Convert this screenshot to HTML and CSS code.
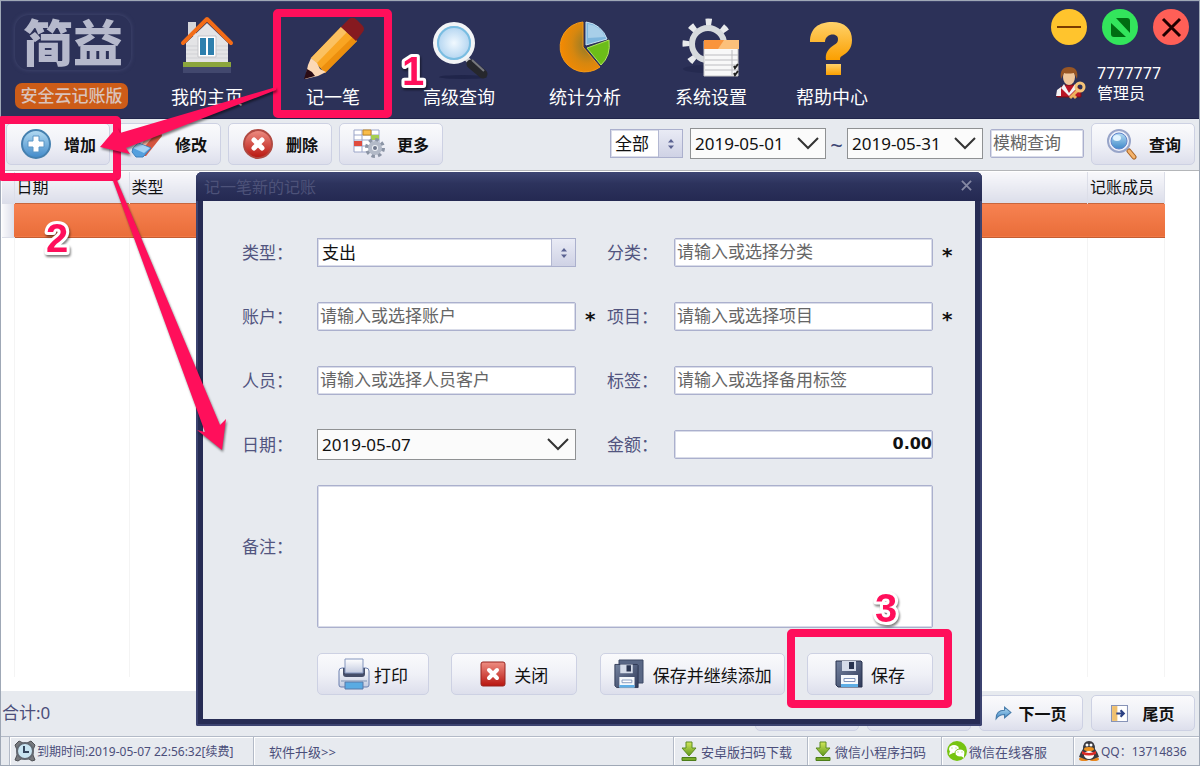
FILE: index.html
```
<!DOCTYPE html>
<html lang="zh-CN">
<head>
<meta charset="UTF-8">
<title>简益 安全云记账版</title>
<link rel="stylesheet" href="styles.css">
</head>
<body>
<svg class="defs" aria-hidden="true">
	<defs>
		<linearGradient id="g_blue" x1="0" y1="0" x2="0" y2="1"><stop offset="0" stop-color="#b4dcf3"/><stop offset="1" stop-color="#4089c9"/></linearGradient>
		<linearGradient id="g_red" x1="0" y1="0" x2="0" y2="1"><stop offset="0" stop-color="#ee8e83"/><stop offset="1" stop-color="#b8150f"/></linearGradient>
		<linearGradient id="g_gold" x1="0" y1="0" x2="0" y2="1"><stop offset="0" stop-color="#ffd26a"/><stop offset="1" stop-color="#fb9f00"/></linearGradient>
		<linearGradient id="g_green" x1="0" y1="0" x2="0" y2="1"><stop offset="0" stop-color="#d2e85b"/><stop offset="1" stop-color="#5d971b"/></linearGradient>
		<linearGradient id="g_steel" x1="0" y1="0" x2="1" y2="1"><stop offset="0" stop-color="#75839f"/><stop offset="1" stop-color="#303b5b"/></linearGradient>
		<linearGradient id="g_paper" x1="0" y1="0" x2="0" y2="1"><stop offset="0" stop-color="#ffffff"/><stop offset="1" stop-color="#c3cbe0"/></linearGradient>
		<radialGradient id="g_lens"><stop offset="0" stop-color="#f1f9ff"/><stop offset="1" stop-color="#a9cfee"/></radialGradient>
		<radialGradient id="g_pie" cx=".68" cy=".45" r=".7"><stop offset="0" stop-color="#8b7a2c"/><stop offset=".55" stop-color="#d7870f"/><stop offset="1" stop-color="#f88a00"/></radialGradient>
	</defs>
	<symbol id="i_updown" viewBox="0 0 8 12"><path fill="#5a6291" d="M1 4.500 4 1l3 3.500zM1 7.500h6L4 11z"/></symbol>
	<symbol id="i_chevron" viewBox="0 0 22 13"><path fill="none" stroke="#333" stroke-width="2" d="m1 1 10 10L21 1"/></symbol>
	<symbol id="i_down" viewBox="0 0 16 20"><path fill="url(#g_green)" stroke="#5d8c22" d="M5 1h6v6h4l-7 8-7-8h4z"/><path fill="#79ab2b" stroke="#4c7d1a" d="M1 16.500h14v3H1z"/></symbol>
	<symbol id="i_disk" viewBox="0 0 28 28"><path fill="url(#g_steel)" stroke="#28324f" d="M1 1h25l1 1v25H3l-2-2z"/><path fill="#d4dbe9" d="M7 1h14v10H7z"/><path fill="#28334f" d="M14 2h5v7h-5z"/><path fill="#f5f8fc" d="M6 15h17v12H6z"/><path fill="#5eaee6" d="M6 24h17v3H6z"/><path fill="#fff" stroke="#7f93ba" d="M9 18.500h11v3H9z"/></symbol>
</svg>

<div class="app">
	<header class="header">
		<div class="brand">
			<div class="brand_name">简益</div>
			<div class="brand_tag">安全云记账版</div>
		</div>
		<nav class="nav">
			<a class="nav_item" href="#">
				<svg class="nav_icon" viewBox="3 1 60 60">
					<path fill="#586083" opacity=".5" d="M9 52h48v6H9z"/>
					<path fill="#d6d6da" d="M14 7h8v14h-8z"/>
					<path fill="#e4e4e6" d="m33 8 21 20v19H12V28z"/>
					<path stroke="#d0d1d5" d="M12 31h42M12 35h42M12 39h42M12 43h42"/>
					<path fill="none" stroke="#f36c17" stroke-width="4" stroke-linecap="round" stroke-linejoin="round" d="M9 28 33 4l24 24"/>
					<path fill="#fff" stroke="#c5c5c9" d="M24 21h18v21H24z"/><path fill="#2d7fad" d="M26 23h6v17h-6zM34 23h6v17h-6z"/>
					<path fill="#8ba63c" d="M9 47h48v5H9z"/>
				</svg>
				<span>我的主页</span>
			</a>
			<a class="nav_item" href="#">
				<svg class="nav_icon" viewBox="-1 0 60 60">
					<path fill="#f9a522" d="m37 11 16 14-32 32-14-15z"/>
					<path fill="#fbc161" d="m37 11 6 5-30 31-6-5z"/>
					<path fill="#ed8f0d" d="m49 21 4 4-32 32-4-5z"/>
					<path fill="#fcd8b5" d="m7 42-3 7L1 63l13-3 8-4-6-3-3-6z"/>
					<path fill="#2b0c14" d="m3 53-3 10 11-3-3-4z"/>
					<path fill="#861a20" d="m37 11 8-8q4-3 8 1l5 5q4 4 0 8l-6 8z"/>
				</svg>
				<span>记一笔</span>
			</a>
			<a class="nav_item" href="#">
				<svg class="nav_icon" viewBox="0 0 60 60">
					<ellipse cx="34" cy="61" rx="24" ry="2" fill="#20254a"/>
					<path stroke="#c9c9cc" stroke-width="5" d="m36 41 6 6"/>
					<path stroke="#26272c" stroke-width="9" stroke-linecap="round" d="m42 48 12 10"/><path stroke="#77787d" stroke-width="2" d="m43 44 12 11"/>
					<circle cx="25" cy="27" r="19" fill="url(#g_lens)" stroke="#f2f4f6" stroke-width="4"/><circle cx="25" cy="27" r="16" fill="none" stroke="#79bde1" stroke-width="2"/>
				</svg>
				<span>高级查询</span>
			</a>
			<a class="nav_item" href="#">
				<svg class="nav_icon" viewBox="0 0 60 60">
					<path fill="url(#g_pie)" stroke="#f59a17" d="M28 6a25 25 0 1 0 17 45L28 31z"/>
					<path fill="#7eb6dd" stroke="#cae4f4" d="M31 6a25 25 0 0 1 21 17L31 29z"/><path fill="#a8cfe9" d="M33 8q13 2 17 13l-17 1z"/>
					<path fill="#6cbd18" stroke="#b3e561" d="M54 24q2 16-8 25L32 32z"/>
				</svg>
				<span>统计分析</span>
			</a>
			<a class="nav_item" href="#">
				<svg class="nav_icon" viewBox="-1 -1 60 60">
					<ellipse cx="26" cy="52" rx="25" ry="4" fill="#252a50"/>
					<circle cx="26" cy="27" r="22" fill="none" stroke="#e8eaec" stroke-width="7" stroke-dasharray="6 11.280" stroke-dashoffset="3"/>
					<circle cx="26" cy="27" r="16" fill="none" stroke="#d6dadd" stroke-width="6"/>
					<path fill="#f8f8f8" stroke="#c8c8c8" d="M22 24h34v35H22z"/>
					<path fill="#f9943c" d="M22 23h35v9H22z"/><path fill="#fcc07a" d="M42 23h15v9H36z"/>
					<path stroke="#bcbcc0" d="M23 38h33M23 43h33M23 48h33M23 53h33M50 33v25"/>
					<path fill="none" stroke="#222" stroke-width="2" d="m52 49 1 2 3-4m-4 9 1 2 3-4"/>
				</svg>
				<span>系统设置</span>
			</a>
			<a class="nav_item" href="#">
				<svg class="nav_icon" viewBox="0 0 60 60">
					<path fill="url(#g_gold)" d="M8 26C8 12 17 6 30 6s20 7 20 18c0 9-5 13-10 16-2 1-2 2-2 4H24c-1-7 2-11 8-15 3-2 4-3 4-6 0-7-13-6-13 3z"/>
					<path fill="url(#g_gold)" d="M24 48h15v11H24z"/>
				</svg>
				<span>帮助中心</span>
			</a>
		</nav>
		<div class="account">
			<div class="win_btns">
				<button class="win_btn" aria-label="最小化"><svg viewBox="0 0 37 37"><circle cx="18" cy="18" r="18" fill="#ffc42d"/><path stroke="#7a3c00" stroke-width="2" d="M6 18h24"/></svg></button>
				<button class="win_btn" aria-label="最大化"><svg viewBox="0 0 37 37"><circle cx="18" cy="18" r="18" fill="#33e55c"/><path fill="#006d12" d="M14 9h11q3 0 3 3v12zM9 14v11q0 3 3 3h12z"/></svg></button>
				<button class="win_btn" aria-label="关闭窗口"><svg viewBox="0 0 37 37"><circle cx="18" cy="18" r="18" fill="#ff5f57"/><path stroke="#1d0000" stroke-width="3" d="m10 10 17 17M27 10 10 27"/></svg></button>
			</div>
			<div class="user">
				<svg class="user_icon" viewBox="0 0 32 34">
					<path fill="#b91525" stroke="#721019" d="M2 31q-1-9 8-12h9q8 3 7 12z"/>
					<path fill="#f2f3f5" d="m9 18 5 9 6-9 2 4-8 8-8-8zM2 24l4-3v9H1z"/>
					<ellipse cx="14" cy="11" rx="6" ry="8" fill="#efc69a"/><path fill="#985624" d="M6 13Q4 1 14 1t8 12l-3-6q-7 1-10 0z"/>
					<path stroke="#edb15c" stroke-width="3" d="m24 23-9 9m3-3 3 3"/><circle cx="25" cy="21" r="4" fill="none" stroke="#f5c478" stroke-width="3"/>
				</svg>
				<div>7777777<br>管理员</div>
			</div>
		</div>
	</header>

	<div class="toolbar">
		<button class="btn btn_tool">
			<svg class="tool_icon" viewBox="0 0 32 32"><circle cx="16" cy="16" r="14" fill="url(#g_blue)" stroke="#4580af" stroke-width="2"/><path fill="#fff" stroke="#5a96c6" d="M13 8h6v5h5v6h-5v5h-6v-5H8v-6h5z"/></svg>
			<span>增加</span>
		</button>
		<button class="btn btn_tool">
			<svg class="tool_icon" viewBox="0 0 32 32"><path fill="#d5553f" d="M17 4h13l1 4-16 20H6z"/><path fill="#f3b8a6" d="m22 4 3 1L10 23l-4-2z"/><path fill="#55a0de" stroke="#3d80bd" d="m2 20 5-5 13 5-8 9H5l-4-5z"/><path fill="#a5d2f3" d="m2 20 5-5 12 5-6 5z"/></svg>
			<span>修改</span>
		</button>
		<button class="btn btn_tool">
			<svg class="tool_icon" viewBox="0 0 32 32"><circle cx="16" cy="16" r="14" fill="url(#g_red)" stroke="#b04a42" stroke-width="2"/><path stroke="#fff" stroke-width="5" stroke-linecap="round" d="m12 12 8 8m0-8-8 8"/></svg>
			<span>删除</span>
		</button>
		<button class="btn btn_tool">
			<svg class="tool_icon" viewBox="0 0 32 32"><path fill="#fff" stroke="#9ba5c8" d="M1 2h25v22H1zM1 7h25M1 12h25M1 18h25M9 2v22M18 2v22"/><path fill="#f9bd4a" stroke="#c58a24" d="M10 2h8v5h-8z"/><path fill="#a5cf52" d="M18 7h8v5h-8z"/><path fill="#e04c3e" d="M1 13h8v5H1z"/><circle cx="22" cy="20" r="8" fill="none" stroke="#8b94a5" stroke-width="4" stroke-dasharray="3.300 2.980"/><circle cx="22" cy="20" r="5" fill="#eef1f6" stroke="#b3bac8" stroke-width="4"/><circle cx="22" cy="20" r="2" fill="#6e778b"/></svg>
			<span>更多</span>
		</button>

		<div class="filters">
			<div class="pick pick_type">
				<select aria-label="收支范围"><option>全部</option></select>
				<span class="spin"><svg viewBox="0 0 8 12"><use href="#i_updown"/></svg></span>
			</div>
			<div class="pick pick_date">
				<select aria-label="开始日期"><option>2019-05-01</option></select>
				<svg class="chevron" viewBox="0 0 22 13"><use href="#i_chevron"/></svg>
			</div>
			<span class="tilde">~</span>
			<div class="pick pick_date">
				<select aria-label="结束日期"><option>2019-05-31</option></select>
				<svg class="chevron" viewBox="0 0 22 13"><use href="#i_chevron"/></svg>
			</div>
			<input class="field search" type="text" aria-label="模糊查询" placeholder="模糊查询">
			<button class="btn btn_tool">
				<svg class="tool_icon" viewBox="0 0 32 32"><path stroke="#a66124" stroke-width="5" stroke-linecap="round" d="m24 23 5 6"/><path stroke="#f4b36c" stroke-width="3" stroke-linecap="round" d="m24 23 5 6"/><circle cx="14" cy="13" r="11" fill="#eef1fa" stroke="#98a5c9" stroke-width="2"/><circle cx="14" cy="13" r="8" fill="url(#g_blue)" stroke="#6385cc"/><ellipse cx="12" cy="10" rx="4" ry="3" fill="#e2f4ff"/></svg>
				<span>查询</span>
			</button>
		</div>
	</div>

	<main class="list">
		<table class="records">
			<colgroup><col class="col_mark"><col class="col_date"><col><col class="col_member"></colgroup>
			<thead><tr><th></th><th>日期</th><th>类型</th><th>记账成员</th></tr></thead>
			<tbody>
				<tr class="selected"><td></td><td></td><td></td><td></td></tr>
				<tr class="rest"><td></td><td></td><td></td><td></td></tr>
			</tbody>
		</table>
	</main>

	<div class="pager">
		<div class="total">合计:0</div>
		<button class="btn btn_page" aria-label="首页"></button>
		<button class="btn btn_page" aria-label="上一页"></button>
		<button class="btn btn_page">
			<svg class="page_icon" viewBox="0 0 16 16"><path fill="url(#g_blue)" stroke="#477cab" d="M1 13Q1 5 9 5V2l6 5-6 5V9q-5 0-8 4z"/></svg>
			<span>下一页</span>
		</button>
		<button class="btn btn_page btn_last">
			<svg class="page_icon" viewBox="0 0 16 16"><path fill="#fff" stroke="#8793b7" d="M.500.500h15v15H.500z"/><path fill="#efc06f" d="M1 1h5v14H1z"/><path fill="none" stroke="#2c4184" stroke-width="2" d="M5 8h7M9 5l3 3-3 3"/></svg>
			<span>尾页</span>
		</button>
	</div>

	<footer class="status">
		<div class="status_item status_time">
			<svg class="status_icon" viewBox="0 0 22 22"><path fill="#77797d" stroke="#4d4f54" d="m1 5 4-4 4 2h4l4-2 4 4-2 5v5l2 5-3 1-3-2H7l-3 2-3-1 2-5v-5z"/><circle cx="11" cy="11" r="8" fill="#c8e4f1" stroke="#626871" stroke-width="2"/><path fill="none" stroke="#33455c" stroke-width="2" d="M10 6v6h5"/></svg>
			<span>到期时间:2019-05-07 22:56:32<a href="#">[续费]</a></span>
		</div>
		<a class="status_item status_up" href="#">软件升级&gt;&gt;</a>
		<a class="status_item status_link" href="#"><svg class="down_icon" viewBox="0 0 16 20"><use href="#i_down"/></svg>安卓版扫码下载</a>
		<a class="status_item status_link" href="#"><svg class="down_icon" viewBox="0 0 16 20"><use href="#i_down"/></svg>微信小程序扫码</a>
		<a class="status_item status_link status_chat" href="#">
			<svg class="status_icon" viewBox="0 0 22 22"><circle cx="11" cy="11" r="10" fill="#76c410"/><ellipse cx="8" cy="9" rx="5" ry="4" fill="#fff"/><path fill="#fff" d="m4 11-1 4 4-2z"/><ellipse cx="14" cy="13" rx="5" ry="4" fill="#fff" stroke="#76c410"/><path fill="#fff" d="m15 16 3 2v-4z"/><path stroke="#76c410" stroke-width="1" stroke-linecap="round" d="M6 8h0M10 8h0M12 12h0M16 12h0"/></svg>微信在线客服
		</a>
		<a class="status_item status_link status_chat status_qq" href="#">
			<svg class="status_icon" viewBox="0 0 22 22"><ellipse cx="6" cy="19" rx="5" ry="2" fill="#e78720"/><ellipse cx="16" cy="19" rx="5" ry="2" fill="#e78720"/><path fill="#3a3a40" d="M5 9q0-8 6-8t6 8q3 4 4 8l-3 1q-7 4-14 0l-3-1q1-4 4-8z"/><ellipse cx="11" cy="15" rx="5" ry="4" fill="#fff"/><path fill="#d92b26" d="M4 11q7 4 14 0v3q-7 3-14 0z"/><ellipse cx="11" cy="9" rx="5" ry="2" fill="#ee921e"/><circle cx="9" cy="5" r="1.500" fill="#fff"/><circle cx="13" cy="5" r="1.500" fill="#fff"/></svg>QQ：13714836
		</a>
	</footer>
</div>

<div class="dialog" role="dialog" aria-labelledby="dlg_title">
	<div class="dialog_head">
		<h2 id="dlg_title">记一笔新的记账</h2>
		<button class="dialog_x" aria-label="关闭对话框"><svg viewBox="0 0 12 12"><path stroke="#8588a3" stroke-width="2" d="m1 1 10 10M11 1 1 11"/></svg></button>
	</div>
	<form class="dialog_body">
		<div class="form_grid">
			<label for="f_type">类型：</label>
			<div class="pick pick_type">
				<select id="f_type"><option>支出</option></select>
				<span class="spin"><svg viewBox="0 0 8 12"><use href="#i_updown"/></svg></span>
			</div>
			<span></span>
			<label for="f_cat">分类：</label>
			<input class="field" id="f_cat" type="text" placeholder="请输入或选择分类">
			<span class="must">*</span>

			<label for="f_acc">账户：</label>
			<input class="field" id="f_acc" type="text" placeholder="请输入或选择账户">
			<span class="must">*</span>
			<label for="f_item">项目：</label>
			<input class="field" id="f_item" type="text" placeholder="请输入或选择项目">
			<span class="must">*</span>

			<label for="f_person">人员：</label>
			<input class="field" id="f_person" type="text" placeholder="请输入或选择人员客户">
			<span></span>
			<label for="f_tag">标签：</label>
			<input class="field" id="f_tag" type="text" placeholder="请输入或选择备用标签">
			<span></span>

			<label for="f_date">日期：</label>
			<div class="pick pick_date">
				<select id="f_date"><option>2019-05-07</option></select>
				<svg class="chevron" viewBox="0 0 22 13"><use href="#i_chevron"/></svg>
			</div>
			<span></span>
			<label for="f_money">金额：</label>
			<input class="field money" id="f_money" type="text" value="0.00">
			<span></span>
		</div>
		<div class="form_note">
			<label for="f_note">备注：</label>
			<textarea class="field note" id="f_note"></textarea>
		</div>
		<div class="actions">
			<button type="button" class="btn btn_print">
				<svg class="act_icon" viewBox="0 0 32 32"><path fill="url(#g_paper)" stroke="#6b7fae" d="M1 13q0-3 3-3h24q3 0 3 3v14q0 2-2 2H3q-2 0-2-2z"/><path fill="#454e68" d="M5 10h22v6q0 3-3 3H8q-3 0-3-3z"/><path fill="url(#g_paper)" stroke="#8496bd" d="M7 1h18v14H7z"/><path fill="#5aabe3" stroke="#5879a8" d="M7 24h18v7H7z"/><path stroke="#7e93b5" d="M3 23h26"/></svg>
				<span>打印</span>
			</button>
			<button type="button" class="btn btn_close">
				<svg class="close_icon" viewBox="0 0 26 26"><rect x="1" y="1" width="24" height="24" rx="2" fill="url(#g_red)" stroke="#982420"/><path stroke="#fff" stroke-width="4" stroke-linecap="round" d="m9 9 8 8m0-8-8 8"/></svg>
				<span>关闭</span>
			</button>
			<button type="button" class="btn btn_more">
				<svg class="act_icon" viewBox="0 0 32 32"><path fill="#596785" stroke="#3c4864" d="M6 2h24v23H6z"/><svg x="1" y="5" width="25" height="26" viewBox="0 0 28 28"><use href="#i_disk"/></svg></svg>
				<span>保存并继续添加</span>
			</button>
			<button type="button" class="btn btn_save">
				<svg class="save_icon" viewBox="0 0 28 28"><use href="#i_disk"/></svg>
				<span>保存</span>
			</button>
		</div>
	</form>
</div>

<!-- step by step guide -->
<svg class="guide" width="1200" height="766" viewBox="0 0 1200 766">
	<g class="guide_box">
		<rect x="277" y="13" width="111" height="101" rx="1"/>
		<rect x="1" y="120" width="116" height="57" rx="1"/>
		<rect x="791" y="633" width="157" height="71" rx="1"/>
	</g>
	<g class="guide_arrow">
		<path d="m276 87-156 46-3-6-17 20 30 7-4-6 150-58z"/>
		<path d="m112 178 93 254-8-2 25 20 4-31-6 6L116 178z"/>
	</g>
	<g class="guide_num">
		<text x="402" y="85">1</text>
		<text x="46" y="252">2</text>
		<text x="875" y="622">3</text>
	</g>
</svg>
</body>
</html>
```
FILE: styles.css
```
*{
	box-sizing:border-box;
	margin:0;
	padding:0;
}
body{
	font-family:"Noto Sans","Noto Sans CJK SC",sans-serif;
	font-size:17px;
	color:#111;
	background-color:#fff;
}
a{
	color:inherit;
	text-decoration:none;
}
button, input, select, textarea{
	font:inherit;
	color:inherit;
}
button{
	cursor:pointer;
}
svg{
	display:block;
	flex:none;
}
.defs{
	position:absolute;
	width:0;
	height:0;
}
.app{
	display:flex;
	flex-direction:column;
	min-height:100vh;
	border:1px solid #9fa8b6;
}

/* header */
.header{
	display:flex;
	height:118px;
	background-color:#2c3158;
	border-top:1px solid #3c426a;
	border-bottom:1px solid #20254a;
}
.brand{
	width:143px;
	padding:13px 0 0 14px;
}
.brand_name{
	width:116px;
	height:55px;
	border-radius:14px;
	box-shadow:0 0 4px #454b73;
	font-size:50px;
	line-height:56px;
	font-weight:900;
	text-align:center;
	color:#b6b9cc;
}
.brand_tag{
	width:113px;
	margin-top:13px;
	border-radius:7px;
	background-color:#cd5c18;
	font-size:17px;
	line-height:26px;
	font-weight:500;
	text-align:center;
	color:#dac3bb;
}
.nav{
	display:flex;
}
.nav_item{
	display:flex;
	flex-direction:column;
	align-items:center;
	width:126px;
	padding-top:14px;
	font-size:18px;
	line-height:26px;
	color:#fff;
}
.nav_item:last-child{
	width:116px;
}
.nav_icon{
	width:60px;
	height:60px;
	margin-bottom:8px;
	overflow:visible;
}
.account{
	margin-left:auto;
	padding:7px 9px 0 0;
}
.win_btns{
	display:flex;
	gap:14px;
}
.win_btn{
	width:37px;
	height:37px;
	border:0;
	background:none;
}
.user{
	display:flex;
	align-items:center;
	gap:10px;
	margin-top:17px;
	padding-left:4px;
	font-size:16px;
	line-height:20px;
	color:#fff;
}
.user_icon{
	width:32px;
	height:34px;
}

/* buttons */
.btn{
	display:flex;
	align-items:center;
	justify-content:center;
	height:42px;
	border:1px solid #cdd1e3;
	border-radius:5px;
	background:linear-gradient(#fafafc,#f0f1f7 50%,#dddfec);
	white-space:nowrap;
}
.btn_tool{
	width:104px;
	gap:12px;
	font-weight:bold;
	font-size:16px;
}
.tool_icon{
	width:32px;
	height:32px;
}

/* toolbar */
.toolbar{
	display:flex;
	align-items:center;
	gap:7px;
	height:52px;
	padding:0 4px 2px 5px;
	background-color:#e7eaef;
	border-bottom:1px solid #b4b6b9;
}
.filters{
	display:flex;
	align-items:center;
	gap:7px;
	margin-left:auto;
}
.tilde{
	width:7px;
	display:flex;
	justify-content:center;
	font-size:22px;
	color:#3d4674;
}
.field, .pick{
	width:100%;
	height:29px;
	background-color:#fff;
	border:1px solid #abb0cd;
	box-shadow:inset 0 0 0 1px #d9dce9;
}
.field{
	padding:0 2px 2px;
	border-radius:2px;
}
.field::placeholder{
	color:#666;
	opacity:1;
}
.pick{
	display:flex;
	align-items:center;
	position:relative;
}
.pick select{
	flex:1;
	width:100%;
	height:100%;
	padding-left:4px;
	border:0;
	background:none;
	appearance:none;
}
.spin{
	display:flex;
	align-items:center;
	justify-content:center;
	width:24px;
	height:100%;
	border-left:1px solid #b3b8d2;
	background:linear-gradient(#e9ebf5,#cfd2e5);
}
.spin svg{
	width:8px;
	height:12px;
}
.pick_date{
	height:31px;
	padding-right:6px;
	border:1px solid #8f9193;
	box-shadow:none;
	background-color:#fbfbfb;
}
.chevron{
	width:22px;
	height:13px;
}
.filters .pick_type{
	width:73px;
}
.filters .pick_date{
	width:136px;
}
.filters .search{
	width:94px;
}

/* records */
.list{
	flex:1;
	display:grid;
	padding:1px 34px 14px 1px;
}
.records{
	width:100%;
	height:100%;
	table-layout:fixed;
	border-collapse:collapse;
}
.col_mark{
	width:12px;
}
.col_date{
	width:115px;
}
.col_member{
	width:77px;
}
.records th{
	height:31px;
	padding-left:2px;
	border-right:1px solid #dcdee8;
	background:linear-gradient(#f8f8fb,#dcdeea);
	font-weight:normal;
	font-size:16px;
	line-height:24px;
	text-align:left;
	white-space:nowrap;
}
.selected td{
	height:34px;
	border-top:1px solid #c8663d;
	border-bottom:1px solid #c35d32;
	background:linear-gradient(#f78252,#e96d39);
}
.selected td:first-child{
	border-color:#dcdee8;
	background:linear-gradient(90deg,#fafafc,#dcdeea);
}
.rest td{
	border-right:1px solid #f4f4f4;
}

/* pager */
.pager{
	display:flex;
	align-items:flex-start;
	gap:8px;
	height:45px;
	padding:4px 4px 0 1px;
	background-color:#e7eaef;
}
.total{
	margin-right:auto;
	line-height:36px;
	color:#4b4e7a;
}
.btn_page{
	width:104px;
	height:36px;
	gap:6px;
	font-weight:bold;
	font-size:16px;
}
.btn_last{
	gap:14px;
}
.page_icon{
	width:17px;
	height:17px;
}

/* status bar */
.status{
	display:flex;
	height:29px;
	padding-left:8px;
	background-color:#e7eaef;
	border-top:1px solid #b3bac7;
	font-size:13px;
	color:#4b4e7a;
}
.status_item{
	display:flex;
	align-items:center;
	gap:4px;
	border-left:1px solid #b3bac7;
	box-shadow:inset 1px 1px 0 #fff;
	white-space:nowrap;
}
.status_time{
	width:244px;
	padding-left:4px;
	gap:1px;
	font-size:12px;
}
.status_up{
	flex:1;
	padding-left:15px;
}
.status_link{
	width:134px;
	padding-left:7px;
}
.status_chat{
	width:132px;
	padding-left:4px;
	gap:1px;
}
.status_qq{
	width:126px;
	font-size:12px;
}
.status_icon{
	width:22px;
	height:22px;
}
.down_icon{
	width:16px;
	height:20px;
}

/* dialog */
.dialog{
	position:absolute;
	top:172px;
	left:196px;
	right:218px;
	border-radius:6px 6px 2px 2px;
	background-color:#272c54;
	box-shadow:inset 0 0 0 2px #3c4370;
	padding:0 7px 7px;
}
.dialog_head{
	display:flex;
	align-items:center;
	justify-content:space-between;
	height:29px;
	margin:0 -7px;
	padding:0 10px 2px 8px;
	border-radius:6px 6px 0 0;
	background:linear-gradient(#3e4673,#2d335d 40%,#242952);
}
.dialog_head h2{
	font-size:16px;
	font-weight:normal;
	color:#4d5279;
}
.dialog_x{
	width:11px;
	height:11px;
	border:0;
	background:none;
}
.dialog_body{
	padding:37px 0 24px 39px;
	background-color:#e7eaef;
}
.form_grid{
	display:grid;
	grid-template-columns:75px 1fr 31px 67px 1fr 42px;
	grid-auto-rows:29px;
	row-gap:35px;
	align-items:center;
}
.dialog_body label{
	padding-bottom:3px;
	color:#52557f;
	white-space:nowrap;
}
.must{
	padding:4px 0 0 9px;
	font-family:"DejaVu Sans",sans-serif;
	font-weight:bold;
	font-size:20px;
	line-height:20px;
}
.money{
	padding-right:0;
	font-family:"DejaVu Sans",sans-serif;
	font-weight:bold;
	font-size:16px;
	text-align:right;
}
.form_note{
	display:grid;
	grid-template-columns:75px 1fr;
	align-items:center;
	margin-top:26px;
	padding-right:42px;
}
.note{
	display:block;
	height:143px;
	resize:none;
	padding:4px;
}
.dialog_body .form_note label{
	padding-bottom:22px;
}
.actions{
	display:flex;
	justify-content:space-between;
	margin-top:25px;
	padding:0 42px 0 75px;
}
.actions .btn{
	gap:8px;
}
.actions .btn_print{
	gap:4px;
}
.btn_print{
	width:112px;
}
.btn_close, .btn_save{
	width:126px;
}
.btn_more{
	width:185px;
}
.act_icon{
	width:32px;
	height:32px;
}
.close_icon{
	width:26px;
	height:26px;
}
.save_icon{
	width:28px;
	height:28px;
}

/* guide marks */
.guide{
	position:absolute;
	top:0;
	left:0;
	pointer-events:none;
}
.guide_box rect{
	fill:none;
	stroke:#ff0f5b;
	stroke-width:8px;
}
.guide_arrow path{
	fill:#ff0f5b;
	filter:drop-shadow(1px 2px 1px rgba(0,0,0,0.5));
}
.guide_num text{
	font-family:"Liberation Sans",sans-serif;
	font-weight:bold;
	font-size:40px;
	fill:#ff0f5b;
	stroke:#fff;
	stroke-width:6px;
	stroke-linejoin:round;
	paint-order:stroke;
	filter:drop-shadow(1px 2px 1px rgba(0,0,0,0.5));
}
```
